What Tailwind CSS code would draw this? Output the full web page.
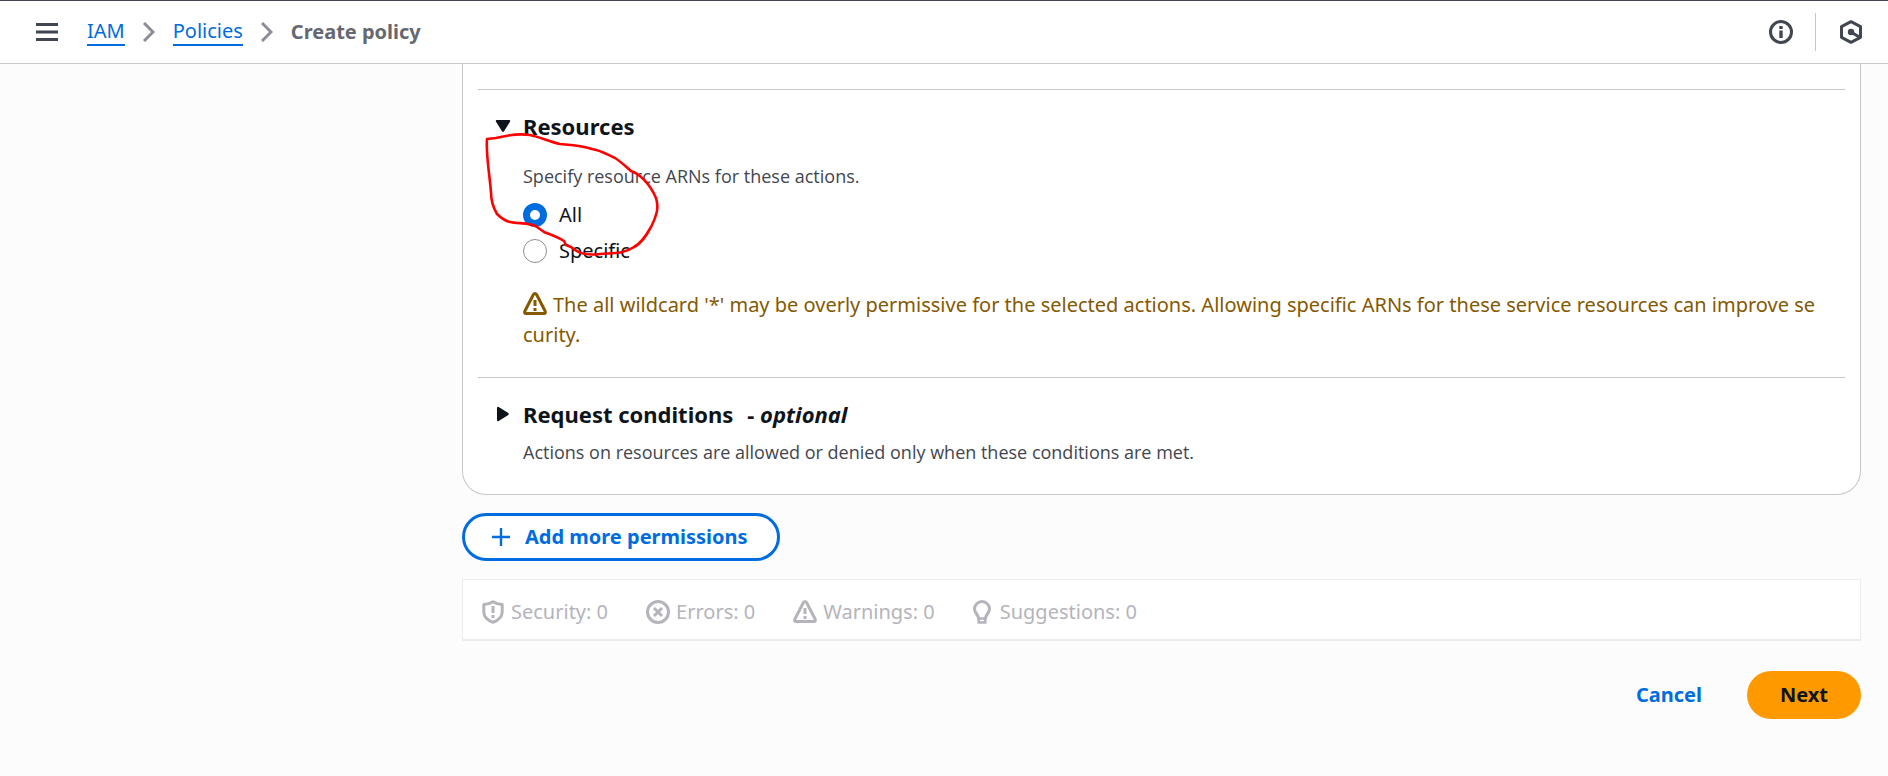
<!DOCTYPE html>
<html lang="en">
<head>
<meta charset="utf-8">
<meta name="viewport" content="width=device-width, initial-scale=1">
<title>Create policy</title>
<script src="https://cdn.jsdelivr.net/npm/@tailwindcss/browser@4"></script>
</head>
<body class="min-h-screen bg-[#fcfcfd] font-['Noto_Sans','Open_Sans',sans-serif] text-[20px] leading-[30px] text-[#0f141a]">
<header class="flex h-16 items-center border-t border-b border-t-[#424650] border-b-[#c6c6cd] bg-white pr-[25px] pl-9">
  <button type="button" aria-label="Open navigation" class="mr-[29px] text-[#424650]">
    <svg class="block" width="22" height="18" viewBox="0 0 22 18" fill="none" stroke="currentColor" stroke-width="3"><path d="M0 1.5h22M0 9h22M0 16.500h22"/></svg>
  </button>
  <nav aria-label="Breadcrumbs" class="grow">
    <ol class="flex items-center">
      <li><a href="#" class="block border-b-2 border-[#006ce0] leading-[26px] text-[#006ce0]">IAM</a></li>
      <li aria-hidden="true" class="mx-[18px] text-[#8c8c94]"><svg width="12" height="20" viewBox="0 0 12 20" fill="none" stroke="currentColor" stroke-width="3"><path d="M1 1l9 9-9 9"/></svg></li>
      <li><a href="#" class="block border-b-2 border-[#006ce0] leading-[26px] text-[#006ce0]">Policies</a></li>
      <li aria-hidden="true" class="mx-[18px] text-[#8c8c94]"><svg width="12" height="20" viewBox="0 0 12 20" fill="none" stroke="currentColor" stroke-width="3"><path d="M1 1l9 9-9 9"/></svg></li>
      <li class="font-bold text-[#656871]" aria-current="page">Create policy</li>
    </ol>
  </nav>
  <button type="button" aria-label="Info" class="text-[#424650]">
    <svg class="block" width="24" height="24" viewBox="0 0 24 24" fill="none" stroke="currentColor" stroke-width="3"><circle cx="12" cy="12" r="10.500"/><path d="M12 6v3M12 10.500v7.500" stroke-width="3.400"/></svg>
  </button>
  <span class="mr-[23px] ml-[22px] h-[38px] w-px bg-[#c6c6cd]"></span>
  <button type="button" aria-label="Amazon Q" class="text-[#424650]">
    <svg class="block" width="24" height="24" viewBox="0 0 24 24" fill="none" stroke="currentColor" stroke-width="3"><path d="M12 1.700l9.500 5v10.600l-9.500 5-9.500-5V6.700z" stroke-linejoin="round"/><circle cx="12" cy="12" r="3.200" fill="currentColor" stroke="none"/><path d="M12 12l9 5.500"/></svg>
  </button>
</header>

<main class="pr-[27px] pb-12 pl-[462px]">
  <section class="relative rounded-b-3xl border border-t-0 border-[#c6c6cd] bg-white px-[15px] pt-[25px]">
    <div class="border-t border-[#c6c6cd] pt-5 pr-4 pl-[17px]">
      <h2><button type="button" aria-expanded="true" class="flex items-center text-[22px] leading-[32px] font-bold">
        <svg class="mr-3" width="16" height="14" viewBox="0 0 16 14" fill="currentColor"><path d="M1.500 1h13q1.200.5.500 1.700L9 12.300q-1 1.200-2 0L1 2.700Q.3 1.500 1.500 1z"/></svg>Resources</button></h2>
      <div class="pt-[19px] pl-7">
        <fieldset>
          <legend class="font-['Open_Sans','Noto_Sans',sans-serif] text-[18px] leading-[30px] text-[#424650]">Specify resource ARNs for these actions.</legend>
          <label class="mt-2 flex items-center gap-3 leading-[32px]"><input type="radio" name="arn" checked class="size-6 appearance-none rounded-full border border-[#8c8c94] bg-white checked:border-[7px] checked:border-[#006ce0]">All</label>
          <label class="mt-1 flex items-center gap-3 leading-[32px]"><input type="radio" name="arn" class="size-6 appearance-none rounded-full border border-[#8c8c94] bg-white checked:border-[7px] checked:border-[#006ce0]">Specific</label>
        </fieldset>
        <p class="mt-[23px] pb-[27px] text-[#855900]"><svg class="mr-[6px] inline-block align-[-4px]" width="24" height="24" viewBox="0 0 24 24" fill="none" stroke="currentColor" stroke-width="3" stroke-linejoin="round"><path d="M10.300 2.700L1.800 19.300q-.6 2.200 1.200 2.200h18q1.800 0 1.200-2.200L13.700 2.700q-1.700-2.200-3.400 0z"/><path d="M12 8v6M12 16v3" stroke-width="3"/></svg>The all wildcard '*' may be overly permissive for the selected actions. Allowing specific ARNs for these service resources can improve se<wbr>curity.</p>
      </div>
    </div>
    <div class="border-t border-[#c6c6cd] pt-5 pr-4 pb-[27px] pl-[17px]">
      <h2><button type="button" aria-expanded="false" class="flex items-center text-[22px] leading-[32px] font-bold">
        <svg class="mr-3" width="16" height="16" viewBox="0 0 16 16" fill="currentColor"><path d="M2 1.500q.5-1.200 1.700-.5l9.600 6q1.200 1 0 2l-9.600 6Q2.500 15.700 2 14.500z"/></svg><span>Request conditions</span><span class="ml-[14px]">- <em>optional</em></span></button></h2>
      <p class="mt-[7px] pl-7 font-['Open_Sans','Noto_Sans',sans-serif] text-[18px] leading-[30px] text-[#424650]">Actions on resources are allowed or denied only when these conditions are met.</p>
    </div>
    <svg class="pointer-events-none absolute top-[66px] left-[17px]" width="180" height="130" viewBox="480 130 180 130" fill="none" stroke="#ff0000" stroke-width="2.600" stroke-linejoin="round" stroke-linecap="round" aria-hidden="true"><path d="M487 139C486 151 488 164 490 182L491 192C491 200 494 209 497 214C501 218 506 221 510 222C518 224 530 222 537 227L544 232C552 235 558 237 564 241L566 245L571 247L575 250C582 255 592 255 600 254C613 253 624 254 634 247C642 243 647 234 651 227C657 215 659 207 656 198C650 184 640 174 631 171C624 165 620 161 615 158C608 155 600 150 592 149C580 145 572 145 560 144C550 142 540 137 530 135C518 133 504 136 496 138Z"/></svg>
  </section>

  <button type="button" class="mt-[18px] flex h-12 items-center rounded-full border-[3px] border-[#006ce0] bg-white pr-[29px] pl-[27px] font-bold text-[#006ce0]">
    <svg class="mr-[15px]" width="18" height="18" viewBox="0 0 18 18" stroke="currentColor" stroke-width="2.400"><path d="M9 0v18M0 9h18"/></svg>Add more permissions</button>

  <ul class="mt-[18px] flex h-[62px] items-center gap-[38px] border border-b-2 border-[#ebebf0] bg-white px-[19px] pt-1 text-[#b4b4bb]">
    <li class="flex items-center gap-[7px]"><svg width="22" height="24" viewBox="0 0 22 24" fill="none" stroke="currentColor" stroke-width="3" stroke-linejoin="round"><path d="M11 1.800Q7 4.500 1.800 4.500V12Q2 19 11 22.300Q20 19 20.200 12V4.500Q15 4.500 11 1.800z"/><path d="M11 6v7M11 15v3"/></svg>Security: 0</li>
    <li class="flex items-center gap-[6px]"><svg width="24" height="24" viewBox="0 0 24 24" fill="none" stroke="currentColor" stroke-width="3"><circle cx="12" cy="12" r="10.500"/><path d="M8 8l8 8M16 8l-8 8"/></svg>Errors: 0</li>
    <li class="flex items-center gap-[6px]"><svg width="24" height="24" viewBox="0 0 24 24" fill="none" stroke="currentColor" stroke-width="3" stroke-linejoin="round"><path d="M10.300 2.700L1.800 19.300q-.6 2.200 1.200 2.200h18q1.800 0 1.200-2.200L13.700 2.700q-1.700-2.200-3.400 0z"/><path d="M12 8v6M12 16v3"/></svg>Warnings: 0</li>
    <li class="flex items-center gap-[9px]"><svg width="18" height="24" viewBox="0 0 18 24" fill="none" stroke="currentColor" stroke-width="3"><path d="M5.500 18.500C5.500 14.500 1.500 13 1.500 9A7.500 7.500 0 0 1 16.500 9C16.500 13 12.500 14.500 12.500 18.500"/><path d="M4 18.500h10M5.800 18v4.500h6.400V18" stroke-width="2.600"/></svg>Suggestions: 0</li>
  </ul>

  <div class="mt-[30px] flex items-center justify-end gap-[10px]">
    <button type="button" class="h-12 rounded-full px-[35px] font-bold text-[#006ce0]">Cancel</button>
    <button type="button" class="h-12 rounded-full bg-[#ff9900] px-[33px] font-bold">Next</button>
  </div>
</main>
</body>
</html>
